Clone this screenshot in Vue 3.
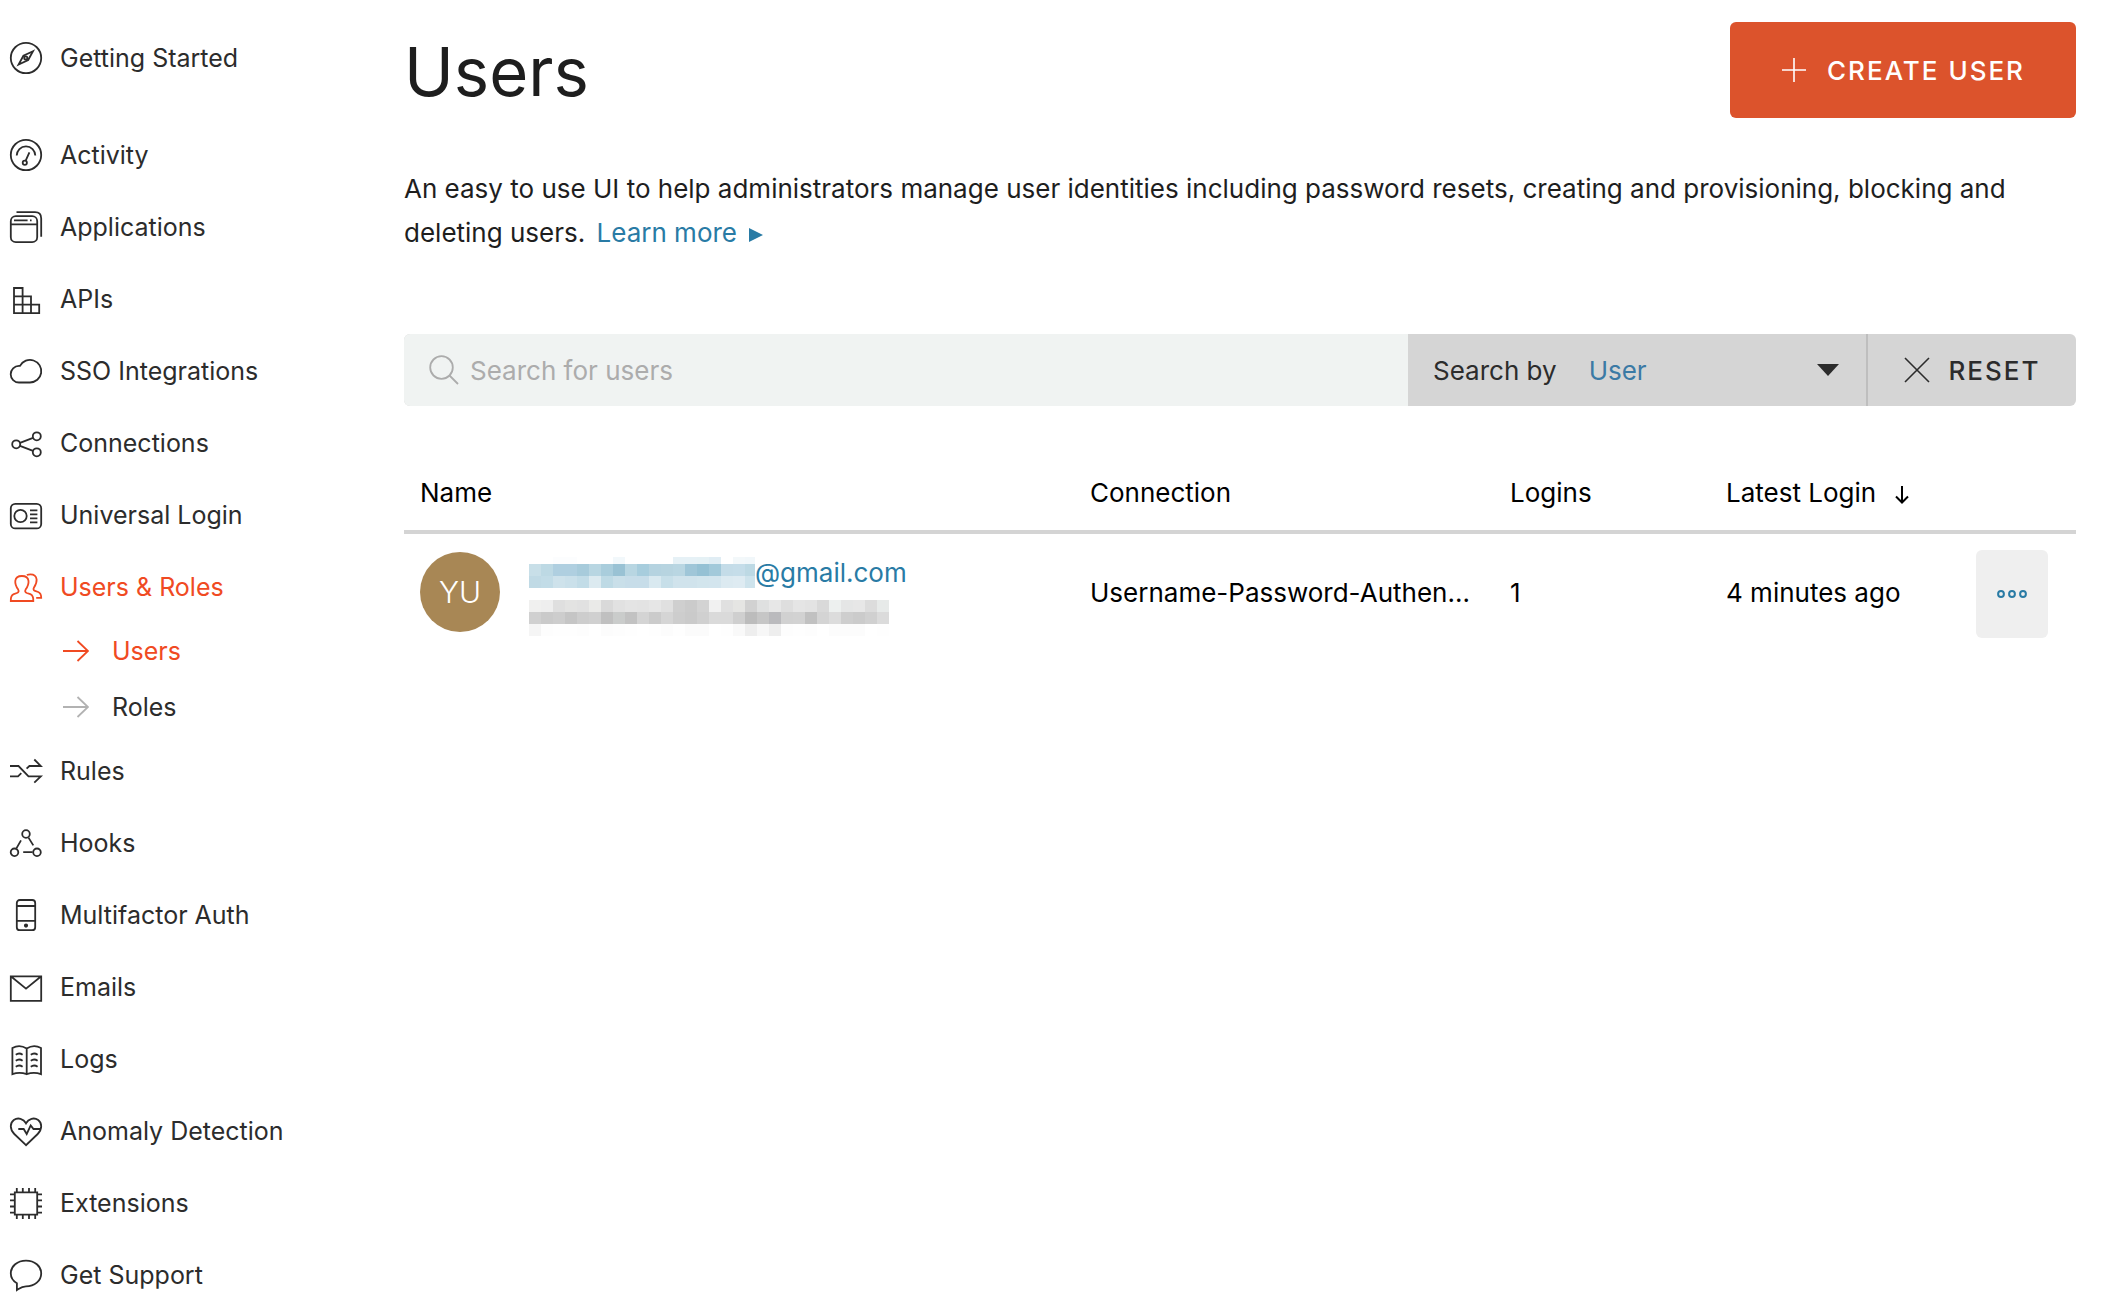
<script setup>
import { ref } from 'vue'

const search = ref('')
const searchBy = ref('User')

const startItem = {
  label: 'Getting Started',
  icon: '<circle cx="16" cy="16" r="15.2"/><path d="M23 9.2l-9.6 4.5L8.6 22.6l9.6-4.6z"/><circle cx="15.8" cy="15.9" r="1.6"/>',
}

const items = [
  { label: 'Activity', icon: '<circle cx="16" cy="16" r="15.2"/><path d="M6.7 16.6a9.3 9.3 0 1 1 18.6 0M19.4 13.4l-3.8 8.4"/><circle cx="14.8" cy="23.7" r="2.1"/>' },
  { label: 'Applications', icon: '<rect x=".8" y="5.2" width="26.4" height="26" rx="5"/><path d="M.8 13.3h26.4M4 9.4h13.6M20 9.4h1.6M6.5 1.2H25c4 0 6.2 2.2 6.2 6.2v18.4"/>' },
  { label: 'APIs', icon: '<path d="M4 5h8.6v25.2H4zM4 13.3h17v16.9M4 21.6h25.2v8.6H4"/>' },
  { label: 'SSO Integrations', icon: '<path d="M9 27.5h11a11.3 11.3 0 1 0-10-16.6H9a8.3 8.3 0 0 0 0 16.6z"/>' },
  { label: 'Connections', icon: '<circle cx="6.2" cy="17.3" r="4"/><circle cx="26.8" cy="9.3" r="4"/><circle cx="26.8" cy="25.3" r="4"/><path d="M10 15.8l13-5M10 18.8l13 5"/>' },
  { label: 'Universal Login', icon: '<rect x=".8" y="4.8" width="30.4" height="24.6" rx="4.5"/><circle cx="10.5" cy="17" r="6.2"/><path d="M20 11.3h7.4M20 15.3h7.4M20 19.3h7.4M20 23.3h7.4"/>' },
  {
    label: 'Users & Roles',
    active: true,
    icon: '<path d="M.8 30c-.2-4.2.8-6 3-6.8l3.2-1.2c1.8-.7 2-2 1.2-3.4C6 15.4 5 12.4 5.3 9.8 5.7 6.5 8.6 5 11.9 5s6.2 1.5 6.6 4.8c.3 2.6-.7 5.6-2.9 8.8-.8 1.4-.6 2.7 1.2 3.4l3.5 1.2c2.2.8 3.2 2.6 3 6.8z"/><path d="M16.8 4c1.2-.5 2.4-.7 3.6-.7 3.4 0 5.8 2 6.2 5 .3 2.8-.8 5.4-2.6 8.2-.9 1.5-.6 2.7 1 3.3l3.2 1.2c2.2.8 3 2.4 3 5.8h-5"/>',
    children: [
      { label: 'Users', active: true },
      { label: 'Roles', active: false },
    ],
  },
  { label: 'Rules', icon: '<path d="M0 11h8.5l10 10.3h12.3l-6.5 6.3M0 21.3h8l3.3-3.2M16.6 13.7l2.8-2.7h11.4l-6.5-6.5"/>' },
  { label: 'Hooks', icon: '<circle cx="16" cy="7" r="3.8"/><circle cx="4.5" cy="25.3" r="3.8"/><circle cx="27" cy="25.3" r="3.8"/><path d="M6.4 21.4l4.6-8M18.5 10.6l4.8 7.8M13.2 25.2h9.4"/>' },
  { label: 'Multifactor Auth', icon: '<rect x="6.8" y="1" width="18.4" height="30.2" rx="3"/><path d="M6.8 7h18.4M6.8 21.8h18.4"/><circle cx="16" cy="26.6" r="1.2" fill="currentColor"/>' },
  { label: 'Emails', icon: '<path d="M.8 5.3h30.4v24.6H.8zM.8 5.3L16 17.6 31.2 5.3"/>' },
  { label: 'Logs', icon: '<path d="M16.7 5.6C12 2.4 7 2.4 2.4 5v26.2c4.6-1.6 9.6-1.6 14.3 0 4.7-1.6 9.7-1.6 14.3 0V5c-4.6-2.6-9.6-2.6-14.3.6zM16.7 5.6v25.6"/><path d="M5.8 11.8c2-1.6 4.6-1.6 6.8 0M5.8 17.8c2-1.6 4.6-1.6 6.8 0M5.8 23.8c2-1.6 4.6-1.6 6.8 0M20.8 11.8c2-1.6 4.6-1.6 6.8 0M20.8 17.8c2-1.6 4.6-1.6 6.8 0M20.8 23.8c2-1.6 4.6-1.6 6.8 0"/>' },
  { label: 'Anomaly Detection', icon: '<path d="M16 30.2L4.3 19C-.5 14.3-.1 8 3.8 5 8 2.1 13.5 3.7 16 8.3 18.5 3.7 24 2.1 28.2 5c3.9 3 4.3 9.3-.5 14z"/><path d="M8.3 14h5.4l3 5 4-8.6 2.8 3.6h7.2"/>' },
  { label: 'Extensions', icon: '<path d="M4.8 5.4h22.4v22.2H4.8zM6.8 1v4M12.8 1v4M19 1v4M25.2 1v4M6.8 28v4M12.8 28v4M19 28v4M25.2 28v4M0 7.4h4.4M0 13.4h4.4M0 19.5h4.4M0 25.6h4.4M27.6 7.4H32M27.6 13.4H32M27.6 19.5H32M27.6 25.6H32"/>' },
  { label: 'Get Support', icon: '<path d="M6.9 31v-6.8C3 21.8.8 18.4.8 14.4.8 7 7.4 1.6 16 1.6S31.2 7 31.2 14.4 24.6 27.3 16 27.3c-4 0-6 1.7-9.1 3.7z"/>' },
]

const columns = [
  { label: 'Name', cls: 'col-name' },
  { label: 'Connection', cls: 'col-connection' },
  { label: 'Logins', cls: 'col-logins' },
]

// Tones of the pixelated redaction blocks, one array per row of 12px cells.
const nameMosaic = [
  ['#fff', '#fff', '#fcfdfe', '#fcfdfe', '#fff', '#fff', '#fff', '#f2f8fb', '#fff', '#fff', '#fff', '#fff', '#e6f1f6', '#e6f1f6', '#e5f1f5', '#e0edf4', '#fff', '#f3f8fa', '#f1f7fa'],
  ['#c8dfe8', '#bdd9e4', '#afcfe0', '#afcfe0', '#a7cbdb', '#b8d6e2', '#a9cddc', '#99c2d4', '#b8d6e2', '#a7cddd', '#b5d3e0', '#b7d4e0', '#b9d6e2', '#9fc6d8', '#95c1d4', '#a2c9da', '#c4dce8', '#c5dde9', '#bdd9e4'],
  ['#c0dae5', '#c2dce7', '#cee2eb', '#cae0ea', '#c2dce7', '#dceaf0', '#bedae5', '#c9dfe9', '#c7dde9', '#c7dde9', '#d9e9f0', '#c7dfe9', '#d0e3ec', '#d0e3ec', '#d2e5ed', '#d3e5ee', '#dceaf1', '#deebf2', '#cee3ec'],
]
const emailMosaic = [
  ['#f0f0ef', '#eee', '#dfdfdf', '#e3e3e2', '#e1e1e1', '#eaeae8', '#d9d9d9', '#e1e1e1', '#e4e4e4', '#e3e3e3', '#e6e6e6', '#e0e0e0', '#cfcfcf', '#cbcbcb', '#d3d3d3', '#f1f1f1', '#e0e0e0', '#e5e5e3', '#d1d1d1', '#dfe0e0', '#e7e7e7', '#dedede', '#e5e5e5', '#e3e3e3', '#d9d9d9', '#edf0ef', '#e5e6e6', '#e7e7e7', '#dcdcdc', '#e7eae9'],
  ['#d0d0d0', '#cacaca', '#cdcdcd', '#c5c5c5', '#cdcdcd', '#d0d0d0', '#c0c0c0', '#cacccb', '#c2c2c2', '#d4d4d4', '#cbcbcb', '#d5d5d5', '#cdcdcd', '#cacaca', '#d0d0d0', '#dadada', '#dadada', '#cfcfcf', '#bcbcbc', '#c6c6c6', '#bababd', '#d1d1d1', '#d2d2d2', '#c1c1c1', '#d4d4d4', '#dcdcdc', '#cecece', '#cbcbcb', '#d0d0d0', '#dbdbdb'],
  ['#f5f5f5', '#fdfdfd', '#fefefe', '#fefefe', '#fdfdfd', '#fff', '#fcfcfc', '#fdfdfd', '#fefefe', '#fff', '#fefefe', '#fcfcfc', '#fefefe', '#fbfbfb', '#fbfbfb', '#fff', '#fefefe', '#f9f9f9', '#eee', '#f7f7f7', '#eee', '#fdfdfd', '#fefefe', '#fdfdfd', '#fff', '#fcfcfc', '#fcfcfc', '#fcfcfc', '#fff', '#fefefe'],
]
</script>

<template>
  <div class="layout">
    <nav class="sidebar" aria-label="Main">
      <a class="nav-link nav-start" href="#">
        <svg class="icon" viewBox="0 0 32 32" aria-hidden="true" v-html="startItem.icon"></svg>
        <span>{{ startItem.label }}</span>
      </a>
      <ul class="nav-list">
        <li v-for="item in items" :key="item.label">
          <a class="nav-link" :class="{ active: item.active }" href="#">
            <svg class="icon" viewBox="0 0 32 32" aria-hidden="true" v-html="item.icon"></svg>
            <span>{{ item.label }}</span>
          </a>
          <ul v-if="item.children" class="sub-list">
            <li v-for="child in item.children" :key="child.label">
              <a class="sub-link" :class="{ active: child.active }" href="#">
                <svg class="sub-arrow" viewBox="0 0 26 24" aria-hidden="true"><path d="M0 12h25M14.5 2L25 12 14.5 22" /></svg>
                <span>{{ child.label }}</span>
              </a>
            </li>
          </ul>
        </li>
      </ul>
    </nav>

    <main class="content">
      <header class="page-head">
        <h1>Users</h1>
        <button class="create" type="button">
          <svg class="glyph" viewBox="0 0 26 26" aria-hidden="true"><path d="M13 1v24M1 13h24" /></svg>
          <span>CREATE USER</span>
        </button>
      </header>

      <p class="intro">
        An easy to use UI to help administrators manage user identities including password resets, creating and provisioning, blocking and deleting users.
        <a class="learn" href="#">Learn more<svg class="play" viewBox="0 0 14 14" aria-hidden="true"><path d="M0 0l14 7-14 7z" /></svg></a>
      </p>

      <form class="search-bar" @submit.prevent>
        <label class="search-field">
          <svg class="magnifier" viewBox="0 0 30 30" aria-hidden="true"><circle cx="12.5" cy="12.5" r="11.3" /><path d="M20.5 20.5l8.5 8.5" /></svg>
          <input v-model="search" type="text" placeholder="Search for users" aria-label="Search for users" />
        </label>
        <div class="search-by">
          <label for="search-by">Search by</label>
          <select id="search-by" v-model="searchBy">
            <option>User</option>
            <option>Email</option>
            <option>Name</option>
          </select>
          <svg class="caret" viewBox="0 0 22 12" aria-hidden="true"><path d="M0 0h22L11 12z" /></svg>
        </div>
        <button class="reset" type="reset">
          <svg class="glyph" viewBox="0 0 26 26" aria-hidden="true"><path d="M1 1l24 24M25 1L1 25" /></svg>
          <span>RESET</span>
        </button>
      </form>

      <table class="users">
        <thead>
          <tr>
            <th v-for="c in columns" :key="c.label" :class="c.cls" scope="col">{{ c.label }}</th>
            <th class="col-latest" scope="col">
              Latest Login
              <svg class="sort" viewBox="0 0 14 18" aria-hidden="true"><path d="M7 0v16M1 10.5L7 16.5l6-6" /></svg>
            </th>
            <th class="col-menu" scope="col" aria-label="Actions"></th>
          </tr>
        </thead>
        <tbody>
          <tr>
            <td>
              <div class="identity">
                <span class="avatar">YU</span>
                <div class="identity-text">
                  <a class="identity-name" href="#">
                    <svg class="mosaic-name" viewBox="0 0 226 36" role="img" aria-label="Hidden name" shape-rendering="crispEdges">
                      <template v-for="(row, r) in nameMosaic" :key="r">
                        <rect v-for="(tone, c) in row" :key="c" :x="c * 12" :y="r ? r * 12 : 5" width="12" :height="r ? 12 : 7" :fill="tone" />
                      </template>
                    </svg>
                    <span class="domain">@gmail.com</span>
                  </a>
                  <svg class="mosaic-email" viewBox="0 0 360 36" role="img" aria-label="Hidden email" shape-rendering="crispEdges">
                    <template v-for="(row, r) in emailMosaic" :key="r">
                      <rect v-for="(tone, c) in row" :key="c" :x="c * 12" :y="r * 12" width="12" height="12" :fill="tone" />
                    </template>
                  </svg>
                </div>
              </div>
            </td>
            <td>Username-Password-Authen...</td>
            <td>1</td>
            <td>4 minutes ago</td>
            <td class="menu-cell">
              <button class="menu" type="button" aria-label="More actions">
                <svg viewBox="0 0 30 8" aria-hidden="true"><circle cx="4" cy="4" r="2.9" /><circle cx="15" cy="4" r="2.9" /><circle cx="26" cy="4" r="2.9" /></svg>
              </button>
            </td>
          </tr>
        </tbody>
      </table>
    </main>
  </div>
</template>

<style>
body {
  background: #fff;
}
</style>

<style scoped>
.layout {
  display: flex;
  font-family: Inter, "Liberation Sans", sans-serif;
  font-size: 26px;
  color: #1e1e1e;
}
a {
  text-decoration: none;
}
button,
input,
select {
  font: inherit;
  color: inherit;
  border: 0;
  margin: 0;
}
svg {
  display: block;
  flex: none;
}

.sidebar {
  flex: none;
  width: 404px;
  box-sizing: border-box;
  padding: 22px 0 0 10px;
  font-size: 25px;
}
.nav-list,
.sub-list {
  list-style: none;
  margin: 0;
  padding: 0;
}
.nav-link {
  display: flex;
  align-items: center;
  gap: 18px;
  height: 72px;
  color: #2c2c2c;
}
.nav-start {
  margin-bottom: 25px;
}
.icon {
  width: 32px;
  height: 32px;
  fill: none;
  stroke: currentColor;
  stroke-width: 1.8;
  overflow: visible;
}
.sub-link {
  display: flex;
  align-items: center;
  gap: 23px;
  height: 56px;
  padding-left: 53px;
  color: #2c2c2c;
}
.sub-arrow {
  width: 26px;
  height: 24px;
  fill: none;
  stroke: #b2b2b2;
  stroke-width: 1.8;
}
.active {
  color: #f04a22;
}
.active .sub-arrow {
  stroke: currentColor;
}

.content {
  flex: 1;
  min-width: 0;
  padding: 22px 28px 0 0;
}
.page-head {
  display: flex;
  align-items: flex-start;
  justify-content: space-between;
}
h1 {
  margin: 0;
  font-size: 67px;
  line-height: 100px;
  font-weight: 400;
}
.create {
  display: flex;
  align-items: center;
  justify-content: center;
  gap: 20px;
  width: 346px;
  height: 96px;
  padding: 0;
  border-radius: 6px;
  background: #dc532c;
  color: #fff;
  font-weight: 500;
  letter-spacing: 2px;
}
.glyph {
  width: 26px;
  height: 26px;
  fill: none;
  stroke: currentColor;
  stroke-width: 1.6;
}
.intro {
  margin: 45px 0 0;
  line-height: 44px;
}
.learn {
  margin-left: 4px;
  color: #297ba5;
}
.play {
  display: inline-block;
  width: 14px;
  height: 14px;
  margin-left: 12px;
  fill: currentColor;
}

.search-bar {
  display: flex;
  height: 72px;
  margin-top: 79px;
  border-radius: 6px;
  overflow: hidden;
  background: #d5d5d5;
  color: #2c2c2c;
}
.search-field {
  flex: 1;
  display: flex;
  align-items: center;
  gap: 11px;
  padding-left: 25px;
  background: #f0f3f2;
}
.magnifier {
  width: 30px;
  height: 30px;
  fill: none;
  stroke: #acacac;
  stroke-width: 1.8;
}
.search-field input {
  flex: 1;
  min-width: 0;
  height: 72px;
  padding: 0;
  background: none;
  outline: none;
}
.search-field input::placeholder {
  color: #acacac;
  opacity: 1;
}
.search-by {
  display: flex;
  align-items: center;
  width: 458px;
  box-sizing: border-box;
  padding: 0 27px 0 25px;
}
.search-by select {
  flex: 1;
  min-width: 0;
  height: 72px;
  margin-left: 32px;
  padding: 0;
  appearance: none;
  background: none;
  color: #3b7aa5;
}
.caret {
  width: 22px;
  height: 12px;
  fill: currentColor;
}
.reset {
  display: flex;
  align-items: center;
  justify-content: center;
  gap: 19px;
  width: 210px;
  border-left: 2px solid #bebebe;
  background: none;
  font-weight: 500;
  letter-spacing: 2px;
}

.users {
  width: 100%;
  margin-top: 50px;
  border-collapse: separate;
  border-spacing: 0;
  table-layout: fixed;
  color: #000;
}
th {
  box-sizing: border-box;
  height: 78px;
  padding: 0 16px 2px;
  border-bottom: 4px solid #d4d4d4;
  font-weight: 400;
  text-align: left;
  white-space: nowrap;
}
td {
  box-sizing: border-box;
  height: 120px;
  padding: 0 16px 4px;
  white-space: nowrap;
}
.col-connection {
  width: 420px;
}
.col-logins {
  width: 216px;
}
.col-latest {
  width: 234px;
}
.col-menu {
  width: 132px;
}
.sort {
  display: inline-block;
  width: 14px;
  height: 18px;
  margin-left: 12px;
  vertical-align: -2px;
  fill: none;
  stroke: currentColor;
  stroke-width: 2px;
}
.identity {
  display: flex;
  align-items: center;
  gap: 29px;
}
.avatar {
  flex: none;
  width: 80px;
  height: 80px;
  border-radius: 50%;
  background: #a88755;
  color: #fff;
  font-size: 30px;
  font-weight: 300;
  line-height: 80px;
  text-align: center;
}
.identity-text {
  padding-top: 4px;
}
.identity-name {
  display: flex;
  align-items: center;
  color: #297ba5;
}
.domain {
  padding-top: 4px;
}
.mosaic-name {
  width: 226px;
  height: 36px;
}
.mosaic-email {
  width: 360px;
  height: 36px;
  margin-top: 12px;
}
td.menu-cell {
  padding: 0;
}
.menu {
  display: flex;
  align-items: center;
  justify-content: center;
  width: 72px;
  height: 88px;
  margin-left: auto;
  margin-right: 28px;
  border-radius: 6px;
  background: #efefef;
  color: #297ba5;
}
.menu svg {
  width: 30px;
  height: 8px;
  fill: none;
  stroke: currentColor;
  stroke-width: 2px;
}
</style>
